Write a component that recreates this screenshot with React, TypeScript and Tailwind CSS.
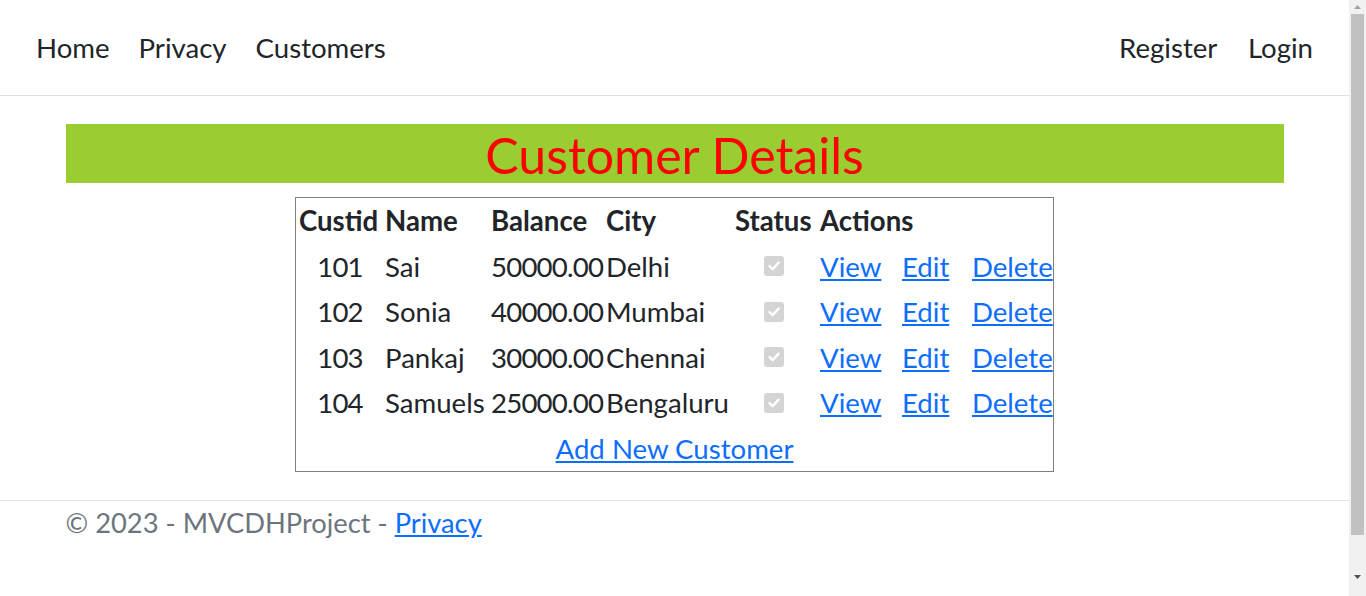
import React from "react";

type Customer = { id: number; name: string; balance: string; city: string };

const customers: Customer[] = [
  { id: 101, name: "Sai", balance: "50000.00", city: "Delhi" },
  { id: 102, name: "Sonia", balance: "40000.00", city: "Mumbai" },
  { id: 103, name: "Pankaj", balance: "30000.00", city: "Chennai" },
  { id: 104, name: "Samuels", balance: "25000.00", city: "Bengaluru" },
];

function CheckBox() {
  return (
    <span className="inline-flex w-[20px] h-[20px] rounded-[3px] bg-[#d4d4d4] items-center justify-center">
      <svg width="14" height="14" viewBox="0 0 14 14" fill="none">
        <path d="M2.5 7.2 L5.6 10.2 L11.6 3.6" stroke="#ffffff" strokeWidth="2.4" strokeLinecap="round" strokeLinejoin="round" />
      </svg>
    </span>
  );
}

function Link({ children }: { children: React.ReactNode }) {
  return <a href="#" className="text-[#0d6efd] underline">{children}</a>;
}

export default function App() {
  return (
    <div className="flex h-[596px] overflow-hidden bg-white text-[#212529] [font-family:Lato,'Open_Sans',sans-serif] text-[27.6px] leading-[1.5]">
      <div className="flex-1 flex flex-col">
        <nav className="h-[96px] border-b border-[#e0e0e0] flex items-center justify-between pl-[36px] pr-[36px]">
          <ul className="flex gap-[29px]">
            <li>Home</li>
            <li>Privacy</li>
            <li>Customers</li>
          </ul>
          <ul className="flex gap-[30.5px]">
            <li>Register</li>
            <li>Login</li>
          </ul>
        </nav>

        <main className="w-[1218px] mx-auto">
          <h1 className="mt-[28px] h-[59px] pt-[4px] bg-[#9acd32] text-center text-[50px] leading-[55px] text-[#ff0000] font-normal">
            Customer Details
          </h1>

          <table className="mt-[14px] mx-auto w-[759px] table-fixed border-separate border-spacing-0 border border-[#808080]">
            <thead>
              <tr className="h-[45.5px] font-bold">
                <th className="w-[88px] p-0 pt-[1px] leading-[44.5px] pl-[3px] text-left font-bold">Custid</th>
                <th className="w-[106px] p-0 pt-[1px] leading-[44.5px] pl-[1px] text-left font-bold">Name</th>
                <th className="w-[115px] p-0 pt-[1px] leading-[44.5px] pl-[1px] text-left font-bold">Balance</th>
                <th className="w-[129px] p-0 pt-[1px] leading-[44.5px] pl-[1px] text-left font-bold">City</th>
                <th className="w-[85px] p-0 pt-[1px] leading-[44.5px] pl-[1px] text-left font-bold">Status</th>
                <th className="w-[234px] p-0 pt-[1px] leading-[44.5px] pl-[1px] text-left font-bold">Actions</th>
              </tr>
            </thead>
            <tbody>
              {customers.map((c) => (
                <tr key={c.id} className="h-[45.5px]">
                  <td className="p-0 pt-[1px] leading-[44.5px] text-center tracking-[-0.8px]">{c.id}</td>
                  <td className="p-0 pt-[1px] leading-[44.5px] pl-[1px]">{c.name}</td>
                  <td className="p-0 pt-[1px] leading-[44.5px] pl-[1px] tracking-[-0.8px]">{c.balance}</td>
                  <td className="p-0 pt-[1px] leading-[44.5px] pl-[1px] whitespace-nowrap">{c.city}</td>
                  <td className="p-0">
                    <div className="flex h-[45.5px] items-center pl-[30px]">
                      <CheckBox />
                    </div>
                  </td>
                  <td className="p-0 pt-[1px] leading-[44.5px] pl-[1px] whitespace-nowrap">
                    <span className="inline-block w-[82px]">
                      <Link>View</Link>
                    </span>
                    <span className="inline-block w-[70px]">
                      <Link>Edit</Link>
                    </span>
                    <Link>Delete</Link>
                  </td>
                </tr>
              ))}
              <tr className="h-[45.5px]">
                <td colSpan={6} className="p-0 pt-[1px] leading-[44.5px] text-center">
                  <Link>Add New Customer</Link>
                </td>
              </tr>
            </tbody>
          </table>
        </main>

        <footer className="mt-[28px] border-t border-[#dee2e6]">
          <div className="w-[1218px] mx-auto text-[#6c757d] text-[27.3px] leading-[43px]">
            © 2023 - MVCDHProject - <Link>Privacy</Link>
          </div>
        </footer>
      </div>

      <div className="w-[17px] shrink-0 bg-[#f1f1f1] flex flex-col items-center">
        <div className="h-[14px] flex items-center justify-center">
          <svg width="7" height="4" viewBox="0 0 7 4">
            <path d="M0 4 L3.5 0 L7 4 Z" fill="#a3a3a3" />
          </svg>
        </div>
        <div className="w-[13px] h-[521px] bg-[#c1c1c1]" />
        <div className="flex-1 flex items-end justify-center pb-[17px]">
          <svg width="7" height="4" viewBox="0 0 7 4">
            <path d="M0 0 L7 0 L3.5 4 Z" fill="#505050" />
          </svg>
        </div>
      </div>
    </div>
  );
}
